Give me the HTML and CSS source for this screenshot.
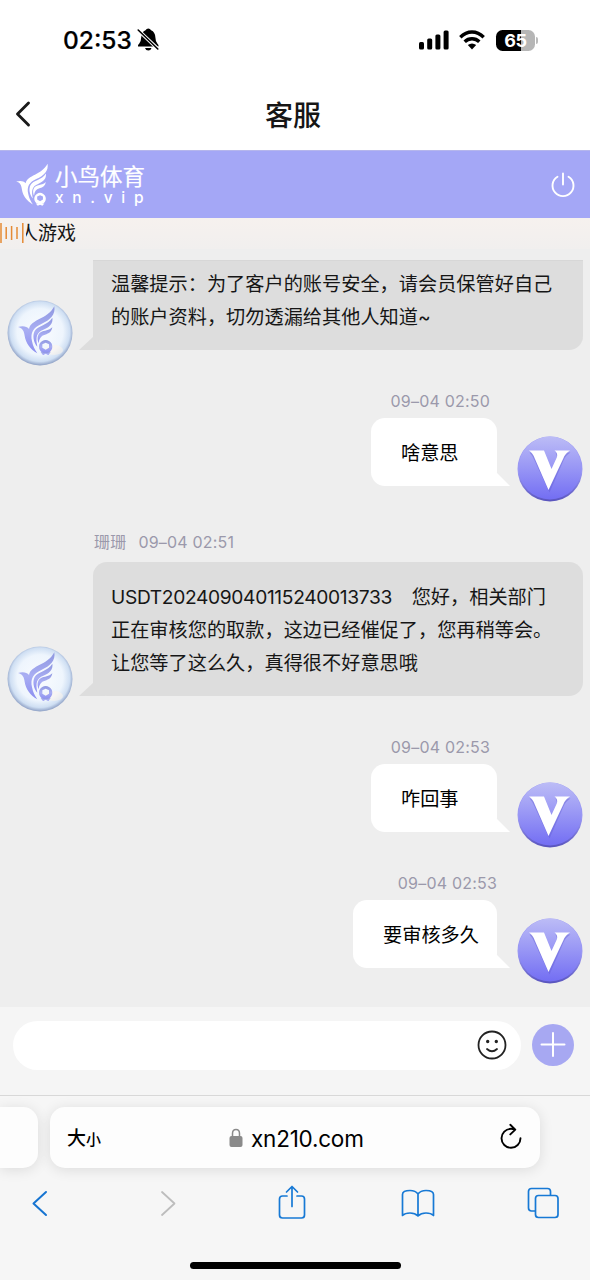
FILE: index.html
```html
<!DOCTYPE html>
<html lang="zh-CN">
<head>
<meta charset="utf-8">
<title>客服</title>
<link rel="stylesheet" href="styles.css">
</head>
<body>
<svg class="defs" aria-hidden="true">
  <defs>
    <linearGradient id="vg" x1="0" y1="0" x2="0" y2="1"><stop offset="0" stop-color="#bcbcf6"/><stop offset=".5" stop-color="#9896f5"/><stop offset="1" stop-color="#736ef3"/></linearGradient>
    <linearGradient id="vr" x1="0" y1="0" x2="0" y2="1"><stop offset=".55" stop-color="#9a98f3"/><stop offset="1" stop-color="#5853bd"/></linearGradient>
    <radialGradient id="pearl" cx=".5" cy=".48" r=".52"><stop offset="0" stop-color="#fafcff"/><stop offset=".68" stop-color="#eef5fd"/><stop offset=".88" stop-color="#cfdff3"/><stop offset="1" stop-color="#8d9fc4"/></radialGradient>
    <linearGradient id="wing" x1="0" y1="0" x2="0" y2="1"><stop offset="0" stop-color="#8f98e0"/><stop offset=".5" stop-color="#a9aef3"/><stop offset="1" stop-color="#8b8df0"/></linearGradient>
    <symbol id="bird" viewBox="50 28 118 154">
      <path d="M54 95C65 91 80 91 87 101C93 71 142 73 163 33C167 58 151 74 124 86C100 97 90 112 96 138C99 153 104 163 112 174C91 162 77 143 74 122C72 107 68 99 54 95Z"/>
      <path d="M157 67C160 84 148 96 130 103C110 111 106 125 112 154C100 141 97 120 104 107C113 90 144 90 157 67Z"/>
      <path d="M157 96C155 109 147 115 135 118C123 121 117 130 116 144C110 129 113 117 122 111C133 105 147 106 157 96Z"/>
      <path fill-rule="evenodd" d="M137 134A20 20 0 1 1 136.900 134ZM137 142L127 147L127 157L137 163L147 157L147 147Z"/>
      <path d="M122 171H152L145 179L137 175L129 179Z"/>
    </symbol>
    <symbol id="agent" viewBox="0 0 66 66">
      <circle cx="33" cy="33" r="32.500" fill="url(#pearl)"/>
      <ellipse cx="47" cy="50" rx="9" ry="5" fill="#fff6e9" opacity=".5"/>
      <use href="#bird" x="9.700" y="4.700" width="39.300" height="51.300" fill="url(#wing)"/>
    </symbol>
    <symbol id="user" viewBox="0 0 66 66">
      <circle cx="33" cy="33" r="32.500" fill="url(#vr)"/>
      <circle cx="33" cy="32" r="31.500" fill="url(#vg)"/>
      <path transform="translate(.5 1.500)" fill="#5f5bd0" opacity=".4" d="M12 15H26L34 35L40 20L38 15H53Q48 18 46 23L32 55L17 23Q15 18 12 15Z"/>
      <path fill="#fff" d="M12 14.500H27L34.500 33L40 21Q41 17 37.500 14.500H53Q48.500 17 46.500 22L31.500 54L18 23Q16 17 12 14.500Z"/>
    </symbol>
  </defs>
</svg>
<div class="phone">
  <div class="status">
    <span class="clock">02:53</span>
    <svg class="bell" viewBox="0 0 22 24"><path fill="#000" d="M1 18.500Q.5 17 2.300 15.500Q4 13.500 4.200 9.500Q4.500 4 8.500 2.300Q9.500 .5 11.300 .5T14.100 2.300Q18.100 4 18.400 9.500Q18.500 13.500 20.300 15.500Q22 17 21.500 18.500ZM8 20H14.500Q13.800 22.500 11.300 22.500T8 20Z"/><path d="M1 2L21 21" stroke="#fff" stroke-width="3.400"/><path d="M1.200 2L20.800 21" stroke="#000" stroke-width="1.600" stroke-linecap="round"/></svg>
    <svg class="signal" viewBox="0 0 30 20"><rect y="12" width="5" height="7.500" rx="1.500"/><rect x="8.200" y="8.500" width="5" height="11" rx="1.500"/><rect x="16.400" y="4.500" width="5" height="15" rx="1.500"/><rect x="24.600" y=".5" width="5" height="19" rx="1.500"/></svg>
    <svg class="wifi" viewBox="0 0 26 20" fill="none" stroke="#000" stroke-width="3.400"><path d="M1.300 7.200Q6.500 2 13 2T24.700 7.200"/><path d="M5.700 11.700Q8.700 8.700 13 8.700T20.300 11.700"/><path fill="#000" stroke="none" d="M8.800 15.100Q13 11.800 17.200 15.100L13 19.400Z"/></svg>
    <span class="battery">65</span><span class="nub"></span>
  </div>
  <header class="nav">
    <svg class="nav-back" viewBox="0 0 16 28"><path d="M13.500 3L2.500 14L13.500 25" fill="none" stroke="#1a1a1a" stroke-width="2.900" stroke-linecap="round" stroke-linejoin="round"/></svg>
    <h1 class="nav-title">客服</h1>
  </header>
  <div class="brand">
    <svg class="brand-bird"><use href="#bird" width="34" height="45" fill="#fff"/></svg>
    <div class="brand-words"><span class="brand-name">小鸟体育</span><span class="brand-url">xn.vip</span></div>
    <svg class="power" viewBox="0 0 26 26" fill="none" stroke="#fff" stroke-width="1.900" stroke-linecap="round"><path d="M7.500 4.700A10.500 10.500 0 1 0 18.500 4.700M13 1.500V12.500"/></svg>
  </div>
  <div class="notice">
    <svg class="wave" viewBox="0 0 26 22" stroke="#e58a35" stroke-width="1.500"><path d="M1 1V21M6.200 5V17M11.600 4V18M17 5V17M22.800 1V21"/></svg>
    <span class="ticker"><span class="ticker-text">人游戏</span></span>
  </div>
  <main class="chat">
    <section class="msg agent first">
      <svg class="avatar"><use href="#agent" width="66" height="66"/></svg>
      <div class="bubble clipped"><p>温馨提示：为了客户的账号安全，请会员保管好自己</p><p>的账户资料，切勿透漏给其他人知道~</p></div>
    </section>
    <div class="meta right">09–04 02:50</div>
    <section class="msg user"><div class="bubble">啥意思</div><svg class="avatar"><use href="#user" width="66" height="66"/></svg></section>
    <div class="meta left"><span>珊珊</span><span>09–04 02:51</span></div>
    <section class="msg agent">
      <svg class="avatar"><use href="#agent" width="66" height="66"/></svg>
      <div class="bubble"><p class="order"><span class="order-id">USDT202409040115240013733</span><span>您好，相关部门</span></p><p>正在审核您的取款，这边已经催促了，您再稍等会。</p><p>让您等了这么久，真得很不好意思哦</p></div>
    </section>
    <div class="meta right">09–04 02:53</div>
    <section class="msg user"><div class="bubble">咋回事</div><svg class="avatar"><use href="#user" width="66" height="66"/></svg></section>
    <div class="meta right wide">09–04 02:53</div>
    <section class="msg user"><div class="bubble">要审核多久</div><svg class="avatar"><use href="#user" width="66" height="66"/></svg></section>
  </main>
  <div class="composer">
    <div class="field"><svg class="smile" viewBox="0 0 30 30" fill="none" stroke="#222" stroke-width="1.800" stroke-linecap="round"><circle cx="15" cy="15" r="13.500"/><path d="M10 19Q15 23.500 20 19"/><circle cx="10.700" cy="11.500" r=".8" fill="#222"/><circle cx="19.300" cy="11.500" r=".8" fill="#222"/></svg></div>
    <div class="plus"><svg viewBox="0 0 42 42"><path d="M9.500 20.500H32.500M21 9V32" stroke="#fff" stroke-width="2" stroke-linecap="round"/></svg></div>
  </div>
  <footer class="browser">
    <div class="tabs">
      <div class="tab-prev"></div>
      <div class="address">
        <span class="size-a">大</span><span class="size-b">小</span>
        <svg class="lock" viewBox="0 0 14 20"><path d="M3.500 9V5.500Q3.500 1.500 7 1.500T10.500 5.500V9" fill="none" stroke="#8a8a8a" stroke-width="1.500"/><rect x=".5" y="8" width="13" height="11" rx="2" fill="#8a8a8a"/></svg>
        <span class="domain">xn210.com</span>
        <svg class="reload" viewBox="0 0 24 28" fill="none" stroke="#000" stroke-width="1.900" stroke-linecap="round" stroke-linejoin="round"><path d="M15.500 6.400Q13.800 5.800 12 5.800A9.500 9.500 0 1 0 21.500 15.300M11.300 1.800L16.300 6.600L11.300 11.400"/></svg>
      </div>
    </div>
    <nav class="tools">
      <svg viewBox="0 0 36 36" fill="none" stroke="#1674d1" stroke-width="2" stroke-linecap="round" stroke-linejoin="round"><path d="M23 7L10.500 18.500L23 30"/></svg>
      <svg viewBox="0 0 36 36" fill="none" stroke="#bdbdbd" stroke-width="1.800" stroke-linecap="round" stroke-linejoin="round"><path d="M13 7L25.500 18.500L13 30"/></svg>
      <svg viewBox="0 0 36 36" fill="none" stroke="#1779d5" stroke-width="1.700" stroke-linecap="round" stroke-linejoin="round"><path d="M13 11H8.500Q5.500 11 5.500 14V30Q5.500 33 8.500 33H27.500Q30.500 33 30.500 30V14Q30.500 11 27.500 11H23M18 21.500V1.500M12.500 7L18 1.500L23.500 7"/></svg>
      <svg viewBox="0 0 36 36" fill="none" stroke="#1779d5" stroke-width="1.700" stroke-linejoin="round"><path d="M18 9Q15.500 5.500 10 5.500Q2.500 5.500 2.500 9.500V30.500Q5 28 10 28T18 31Q21 28 26 28T33.500 30.500V9.500Q33.500 5.500 26 5.500Q20.500 5.500 18 9V31"/></svg>
      <svg viewBox="0 0 36 36" fill="none" stroke="#1779d5" stroke-width="1.700"><path d="M10.500 26H6.500Q3.500 26 3.500 23V6.500Q3.500 3.500 6.500 3.500H22.500Q25.500 3.500 25.500 6.500V10.500"/><rect x="10.500" y="10.500" width="22.500" height="22" rx="3"/></svg>
    </nav>
    <div class="home"></div>
  </footer>
</div>
</body>
</html>
```
FILE: styles.css
```css
* { box-sizing: border-box; }
body { margin: 0; background: #eee; font-family: "Inter", "Noto Sans CJK SC", sans-serif; color: #161616; }
p, h1 { margin: 0; }
svg { display: block; flex: none; }
.defs { position: absolute; width: 0; height: 0; }
.phone { width: 590px; height: 1280px; display: flex; flex-direction: column; overflow: hidden; }

.status { height: 80px; flex: none; display: flex; align-items: center; padding-left: 63px; background: #fff; }
.clock { width: 74px; font-size: 24.500px; font-weight: 500; white-space: nowrap; -webkit-text-stroke: .2px #000; color: #000; }
.bell { width: 22px; height: 24px; }
.signal { width: 30px; height: 20px; margin-left: 260px; }
.wifi { width: 26px; height: 20px; margin-left: 10px; }
.battery { width: 39px; height: 21px; margin-left: 11px; border-radius: 6.5px; background: linear-gradient(90deg, #000 64%, #b6b6b6 64%); color: #fff; font-size: 18px; font-weight: 700; line-height: 21px; text-align: center; letter-spacing: -.3px; }
.nub { width: 2px; height: 7px; margin-left: 1px; border-radius: 0 2px 2px 0; background: #bbb; }

.nav { height: 70px; flex: none; display: grid; grid-template-columns: 40px 1fr 44px; align-items: center; background: #fff; }
.nav-back { width: 16px; height: 28px; margin: 0 0 2px 15px; }
.nav-title { text-align: center; font-size: 28px; font-weight: 500; line-height: 40px; padding-top: 2px; }

.brand { height: 68px; flex: none; display: flex; align-items: center; padding: 0 14px 0 15px; background: #a4a7f6; color: #fff; border-top: 1px solid #b5b6ec; }
.brand-bird { width: 34px; height: 45px; }
.brand-words { display: flex; flex-direction: column; margin: 2px auto 0 6px; }
.brand-name { font-size: 22.500px; font-weight: 400; -webkit-text-stroke: .2px #fff; line-height: 25px; }
.brand-url { font-size: 15.500px; line-height: 18px; letter-spacing: 8.700px; font-weight: 500; white-space: nowrap; }
.power { width: 26px; height: 26px; }

.notice { height: 31px; flex: none; display: flex; align-items: center; background: linear-gradient(#f6f1ee, #f1efee); padding-bottom: 1px; }
.wave { width: 26px; height: 22px; }
.ticker { width: 50px; overflow: hidden; display: flex; justify-content: flex-end; }
.ticker-text { font-size: 19px; line-height: 28px; white-space: nowrap; flex: none; padding-top: 1px; }

.chat { flex: 1; min-height: 0; background: #eee; padding-top: 11px; font-size: 19.200px; line-height: 33px; }
.msg { display: flex; align-items: flex-end; padding: 0 7px; }
.msg.user { justify-content: flex-end; }
.avatar { width: 66px; height: 66px; margin-bottom: -15.500px; }
.bubble { position: relative; border-radius: 14px; white-space: nowrap; }
.bubble::after { content: ""; position: absolute; bottom: 0; width: 26px; height: 13px; background: inherit; }
.agent .bubble { width: 490px; height: 134px; margin-left: 20px; padding: 19px 18px 0; background: #ddd; }
.agent .bubble::after { left: -14px; clip-path: polygon(0 100%, 14px 0, 100% 0, 100% 100%); }
.agent .bubble.clipped { height: 90px; padding-top: 8px; border-radius: 0 0 14px 14px; box-shadow: inset 0 1px #d7d7d7; }
.user .bubble { height: 68px; padding: 18px 18px 16px 30px; margin-right: 20px; background: #fff; color: #000; line-height: 34px; min-width: 126px; }
.user .bubble::after { right: -13px; clip-path: polygon(0 0, 13px 0, 100% 100%, 0 100%); }
.order { display: flex; justify-content: space-between; width: 435px; }
.order-id { letter-spacing: -.35px; }
.meta { height: 32px; font-size: 16px; line-height: 30px; color: #9b99ab; letter-spacing: .2px; }
.meta.right { margin-top: 36px; padding-right: 100px; text-align: right; }
.meta.right.wide { padding-right: 93px; }
.meta.left { margin-top: 42px; height: 34px; display: flex; gap: 12px; padding-left: 94px; line-height: 29px; }

.composer { height: 88px; flex: none; background: #f5f5f5; padding: 14px 16px 0 13px; display: flex; gap: 11px; }
.field { width: 508px; height: 49px; border-radius: 25px; background: #fff; display: flex; align-items: center; justify-content: flex-end; padding-right: 14px; }
.smile { width: 30px; height: 30px; margin-bottom: 2px; }
.plus { width: 42px; height: 42px; margin-top: 3px; border-radius: 50%; background: #a7a8f2; }

.browser { height: 185px; flex: none; background: #f6f6f6; border-top: 1px solid #d8d8d8; }
.tabs { display: flex; gap: 12px; padding-top: 11px; }
.tab-prev, .address { height: 61px; background: #fdfdfd; box-shadow: 0 2px 14px rgba(0, 0, 0, .11); }
.tab-prev { width: 38px; border-radius: 0 15px 15px 0; }
.address { width: 490px; border-radius: 15px; display: flex; align-items: center; padding: 0 17px; color: #000; }
.size-a { font-size: 19px; font-weight: 500; width: 19px; line-height: 28px; padding-top: 2px; }
.size-b { font-size: 15px; font-weight: 500; width: 15px; padding-top: 4px; line-height: 20px; }
.lock { width: 14px; height: 20px; margin-left: 128px; }
.domain { margin-left: 8px; font-size: 22.500px; letter-spacing: -.22px; line-height: 30px; padding-top: 2px; }
.reload { width: 24px; height: 28px; margin-left: auto; margin-bottom: 2px; }
.tools { display: flex; justify-content: space-between; padding: 17px 29px 0 23px; width: 590px; }
.tools svg { width: 36px; height: 36px; }
.home { width: 211px; height: 7px; border-radius: 4px; margin: 41px auto 0; background: #000; }
```
